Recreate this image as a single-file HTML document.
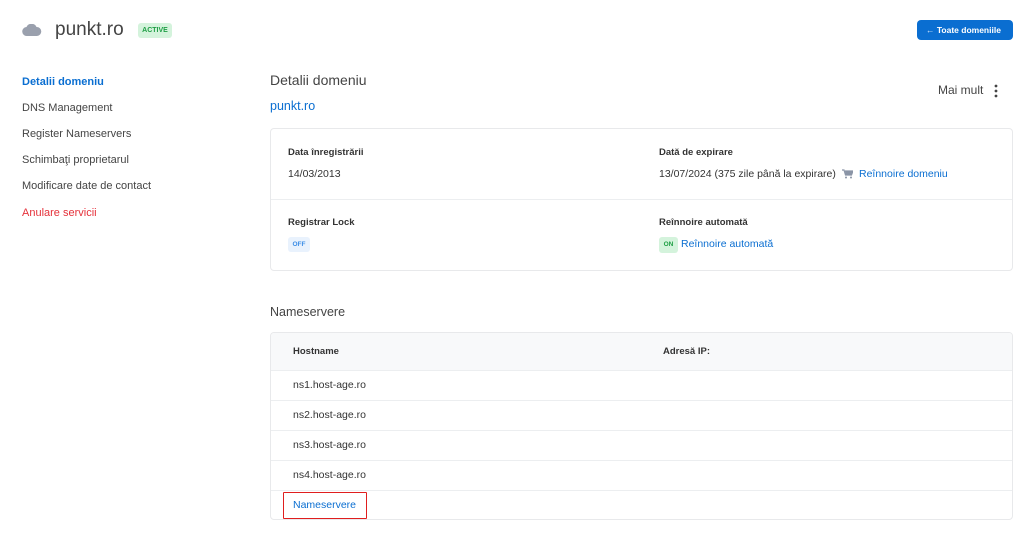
<!DOCTYPE html>
<html><head><meta charset="utf-8"><style>
*{margin:0;padding:0;box-sizing:border-box}
body{width:1024px;height:537px;background:#fff;font-family:"Liberation Sans",sans-serif;color:#333;position:relative;overflow:hidden}
.a{position:absolute;white-space:nowrap}
.blue{color:#0a6ed1}
.side{font-size:11px;color:#444}
.lbl{font-size:9.5px;font-weight:bold;color:#333}
.val{font-size:10.5px;color:#333}
.card{position:absolute;left:270px;width:743px;border:1px solid #e8e9eb;border-radius:4px;background:#fff}
.hr{position:absolute;left:0;right:0;height:1px;background:#eceef0}
</style></head><body>
<svg class="a" style="left:22px;top:24px" width="20" height="12" viewBox="0 0 20 12"><path d="M5 12a4.5 4.5 0 0 1-.5-9A5.5 5.5 0 0 1 14.5 3 4.5 4.5 0 0 1 15 12z" fill="#9aa0ad"/></svg>
<div class="a" style="left:55px;top:19px;font-size:19px;color:#444">punkt.ro</div>
<div class="a" style="left:138px;top:23px;width:34px;height:15px;background:#d4f3dc;border-radius:3px;color:#1e9e44;font-size:7px;font-weight:bold;text-align:center;line-height:15px">ACTIVE</div>
<div class="a" style="left:917px;top:20px;width:96px;height:20px;background:#0a6ed1;border-radius:4px;color:#fff;font-size:8.5px;font-weight:bold;line-height:20px;padding-left:9px"><span style="font-weight:normal;opacity:.8">←</span> Toate domeniile</div>

<div class="a side blue" style="left:22px;top:76px;font-weight:bold;color:#0a6ed1">Detalii domeniu</div>
<div class="a side" style="left:22px;top:102px">DNS Management</div>
<div class="a side" style="left:22px;top:128px">Register Nameservers</div>
<div class="a side" style="left:22px;top:154px">Schimbaţi proprietarul</div>
<div class="a side" style="left:22px;top:180px">Modificare date de contact</div>
<div class="a side" style="left:22px;top:207px;color:#e5313a">Anulare servicii</div>

<div class="a" style="left:270px;top:72px;font-size:14px;color:#444">Detalii domeniu</div>
<div class="a blue" style="left:270px;top:99px;font-size:12.5px">punkt.ro</div>
<div class="a" style="left:938px;top:83px;font-size:12px;color:#444">Mai mult</div>
<svg class="a" style="left:994px;top:84px" width="4" height="14"><circle cx="2" cy="2" r="1.4" fill="#444"/><circle cx="2" cy="7" r="1.4" fill="#444"/><circle cx="2" cy="12" r="1.4" fill="#444"/></svg>

<div class="card" style="top:128px;height:143px">
<div class="hr" style="top:70px"></div>
</div>
<div class="a lbl" style="left:288px;top:147px">Data înregistrării</div>
<div class="a val" style="left:288px;top:168px">14/03/2013</div>
<div class="a lbl" style="left:659px;top:147px">Dată de expirare</div>
<div class="a val" style="left:659px;top:168px">13/07/2024 (375 zile până la expirare)</div>
<svg class="a" style="left:842px;top:169px" width="11" height="10" viewBox="0 0 11 10"><path d="M0 1h2l1.5 5h6L11 2H3" fill="none" stroke="#8a94a6" stroke-width="1.2"/><path d="M3 2h8l-1.5 4h-6z" fill="#8a94a6"/><circle cx="4" cy="8.5" r="1" fill="#8a94a6"/><circle cx="9" cy="8.5" r="1" fill="#8a94a6"/></svg>
<div class="a blue" style="left:859px;top:168px;font-size:10.5px">Reînnoire domeniu</div>
<div class="a lbl" style="left:288px;top:217px">Registrar Lock</div>
<div class="a" style="left:288px;top:237px;width:22px;height:15px;background:#e9f2fd;border-radius:3px;color:#3b8de6;font-size:6.5px;font-weight:bold;text-align:center;line-height:15px">OFF</div>
<div class="a lbl" style="left:659px;top:217px">Reînnoire automată</div>
<div class="a" style="left:659px;top:237px;width:19px;height:16px;background:#d4f3dc;border-radius:3px;color:#1e9e44;font-size:6.5px;font-weight:bold;text-align:center;line-height:16px">ON</div>
<div class="a blue" style="left:681px;top:238px;font-size:10.5px">Reînnoire automată</div>

<div class="a" style="left:270px;top:305px;font-size:12.5px;color:#444">Nameservere</div>
<div class="card" style="top:332px;height:188px;overflow:hidden">
<div style="height:37px;background:#f8f9fa"></div>
<div class="hr" style="top:37px"></div>
<div class="hr" style="top:67px"></div>
<div class="hr" style="top:97px"></div>
<div class="hr" style="top:127px"></div>
<div class="hr" style="top:157px"></div>
</div>
<div class="a lbl" style="left:293px;top:346px">Hostname</div>
<div class="a lbl" style="left:663px;top:346px">Adresă IP:</div>
<div class="a val" style="left:293px;top:379px">ns1.host-age.ro</div>
<div class="a val" style="left:293px;top:409px">ns2.host-age.ro</div>
<div class="a val" style="left:293px;top:439px">ns3.host-age.ro</div>
<div class="a val" style="left:293px;top:469px">ns4.host-age.ro</div>
<div class="a" style="left:283px;top:492px;width:84px;height:27px;border:1.5px solid #e01e1e;border-radius:1px"></div>
<div class="a blue" style="left:293px;top:499px;font-size:10.5px">Nameservere</div>
</body></html>
